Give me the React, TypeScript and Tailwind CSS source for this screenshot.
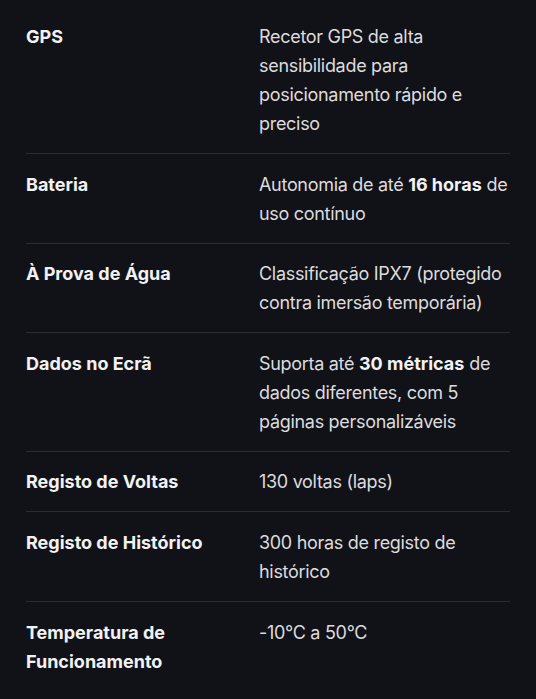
import React from "react";

type Spec = { label: string; value: React.ReactNode };

const SPECS: Spec[] = [
  { label: "GPS", value: "Recetor GPS de alta sensibilidade para posicionamento rápido e preciso" },
  {
    label: "Bateria",
    value: (
      <>
        Autonomia de até <b className="font-bold tracking-normal text-[#f2f2f4]">16 horas</b> de uso contínuo
      </>
    ),
  },
  { label: "À Prova de Água", value: "Classificação IPX7 (protegido contra imersão temporária)" },
  {
    label: "Dados no Ecrã",
    value: (
      <>
        Suporta até <b className="font-bold tracking-normal text-[#f2f2f4]">30 métricas</b> de dados diferentes, com 5 páginas personalizáveis
      </>
    ),
  },
  { label: "Registo de Voltas", value: "130 voltas (laps)" },
  { label: "Registo de Histórico", value: "300 horas de registo de histórico" },
  { label: "Temperatura de Funcionamento", value: "-10°C a 50°C" },
];

export default function App() {
  return (
    <main className="min-h-[699px] bg-[#111217] pl-[26px] pr-[26px] pt-[6.4px] font-['Inter','Noto_Sans',sans-serif] text-[18px] leading-[29px]">
      <div className="flex flex-col">
        {SPECS.map((s, i) => (
          <div
            key={s.label}
            className={`grid grid-cols-[233px_1fr] pt-[15.6px] pb-[15px] ${i < SPECS.length - 1 ? "border-b border-[#2b2c31]" : ""}`}
          >
            <div className="pr-6 font-bold text-[#f2f2f4]">{s.label}</div>
            <div className="tracking-[-0.3px] text-[#dcdcdf]">{s.value}</div>
          </div>
        ))}
      </div>
    </main>
  );
}
